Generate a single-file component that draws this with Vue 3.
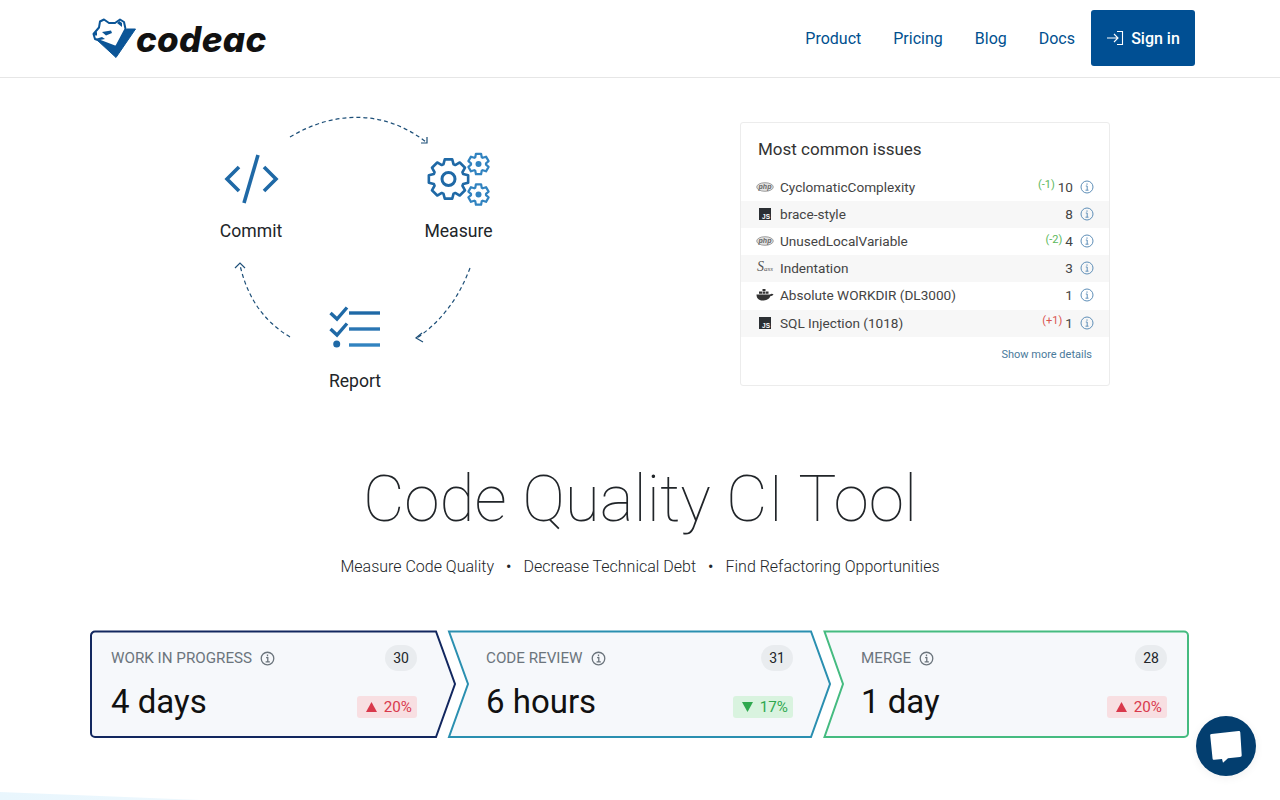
<template>
  <div class="page">
    <header class="topbar">
      <a class="logo">
        <svg class="logo-mark" viewBox="0 0 46 42" width="46" height="42">
          <path d="M5 22 L24 39.500 L43.500 11 L34.500 11 L24 28 L8 21 Z" fill="#0b5597" stroke="#0b5597" stroke-linejoin="round" />
          <path d="M1.500 16 L7 9.500 L8 3.500 L12 1.500 L17 5 L23 5 L28 1.500 L32 4 L33.500 11 L24 29 L7 22.500 L3 21 Z" fill="#fff" stroke="#0b5597" stroke-width="2" stroke-linejoin="round" />
          <path d="M1.500 15 L5 14 L5 17.500 L2.500 17.500 Z M10 14 L19 12.500 L20 15 L14 17.500 Z M3.500 21 L10 19 L13 21 L8 22 Z" fill="#0b5597" />
          <path d="M25 5 L27.500 3 L30 5 L30 9 Z" fill="#0b5597" />
        </svg>
        <span class="logo-text">codeac</span>
      </a>
      <nav class="nav">
        <a v-for="item in navItems" :key="item">{{ item }}</a>
        <button class="signin">
          <svg viewBox="0 0 18 16" width="18" height="16" fill="none" stroke="#fff" stroke-width="1.100">
            <path d="M1 8 H12 M8 4 L12 8 L8 12 M11 1.500 H16.500 V14.500 H11" />
          </svg>
          Sign in
        </button>
      </nav>
    </header>

    <section class="hero">
      <svg class="cycle" viewBox="200 100 310 300" width="310" height="300">
        <g fill="none" stroke="#1d4f78" stroke-width="1.200">
          <path d="M290 137 C335 110 385 110 426 142" stroke-dasharray="4 3" />
          <path d="M421 143 H427 V137" />
          <path d="M470 268 C458 300 440 322 417 338" stroke-dasharray="4 3" />
          <path d="M422 333 L416 338 L423 342" />
          <path d="M290 337 C262 320 247 296 240 265" stroke-dasharray="4 3" />
          <path d="M235 268 L240 263 L245 268" />
        </g>
        <g fill="none" stroke="#1f69a6" stroke-width="3.600">
          <path d="M239 167 L227 179 L239 191 M264 167 L276 179 L264 191" />
          <path d="M258 155 L244 203" />
        </g>
        <g fill="none" stroke="#1f69a6" stroke-width="2.600" stroke-linejoin="round">
          <path :d="gear(448.500, 179, 20, 15.500, 8)" />
          <circle cx="448.500" cy="179" r="6.500" stroke-width="3" />
        </g>
        <g fill="none" stroke="#3183c0" stroke-width="2.200" stroke-linejoin="round">
          <path :d="gear(478.500, 164, 10.500, 7.500, 6)" />
          <circle cx="478.500" cy="164" r="3" fill="#3183c0" stroke="none" />
          <path :d="gear(478.500, 194.500, 10.500, 7.500, 6)" />
          <circle cx="478.500" cy="194.500" r="3" fill="#3183c0" stroke="none" />
        </g>
        <g fill="none" stroke-width="3.400">
          <path d="M330.500 313 L337 319 L347 307.500 M330.500 329 L337 335 L347 323.500" stroke="#1f69a6" />
          <path d="M349 313 H380" stroke="#1f69a6" />
          <path d="M349 329 H380" stroke="#2a76b3" />
          <path d="M349 345 H380" stroke="#3183c0" />
          <circle cx="336.700" cy="344" r="3.500" fill="#1f69a6" stroke="none" />
        </g>
        <text class="cycle-label" x="251" y="237">Commit</text>
        <text class="cycle-label" x="458.500" y="237">Measure</text>
        <text class="cycle-label" x="355" y="387">Report</text>
      </svg>

      <div class="issues">
        <h3>Most common issues</h3>
        <div v-for="row in issues" :key="row.name" class="issue">
          <span class="lang">
            <svg v-if="row.lang === 'php'" viewBox="0 0 18 10" width="18" height="10">
              <ellipse cx="9" cy="5" rx="8.300" ry="4.300" fill="#e2e2e2" stroke="#8a8a8a" stroke-width="0.800" />
              <text x="9" y="7.200" class="php">php</text>
            </svg>
            <svg v-else-if="row.lang === 'js'" class="js-icon" viewBox="0 0 12 12" width="12" height="12">
              <rect width="12" height="12" fill="#2b2f33" />
              <text x="11" y="10.800" class="js">JS</text>
            </svg>
            <span v-else-if="row.lang === 'sass'" class="sass">S<small>ass</small></span>
            <svg v-else viewBox="0 0 18 12" width="18" height="12">
              <path d="M0.500 5.500 H14 C15 4.500 16.500 4.500 17.500 5.500 C16.500 7 15.500 7 14.500 7 C13 10.500 10 11.500 6.500 11.500 C2.500 11.500 0.500 9 0.500 5.500 Z" fill="#333" />
              <path d="M3 2.500 H6 V4.800 H3 Z M6.500 2.500 H9.500 V4.800 H6.500 Z M6.500 0 H9.500 V2 H6.500 Z M10 2.500 H12.500 V4.800 H10 Z" fill="#333" />
            </svg>
          </span>
          <span class="issue-name">{{ row.name }}</span>
          <sup v-if="row.delta" class="issue-delta" :class="row.delta.includes('+') ? 'worse' : 'better'">{{ row.delta }}</sup>
          <span class="issue-count">{{ row.count }}</span>
          <svg class="issue-info" viewBox="0 0 14 14" width="14" height="14" fill="none" stroke="#5f8fb8">
            <circle cx="7" cy="7" r="6" />
            <path d="M5.800 6 H7.200 V10 M5.500 10.200 H8.500 M7 3.400 V4.800" />
          </svg>
        </div>
        <a class="more">Show more details</a>
      </div>
    </section>

    <section class="intro">
      <h1>Code Quality CI Tool</h1>
      <p>
        <span>Measure Code Quality</span><i>•</i><span>Decrease Technical Debt</span><i>•</i><span>Find Refactoring Opportunities</span>
      </p>
    </section>

    <section class="stages">
      <div v-for="stage in stages" :key="stage.label" class="stage" :class="stage.kind">
        <svg class="stage-shape" :viewBox="`0 0 ${stage.width} 108`" :width="stage.width" height="108">
          <path :d="stage.shape" fill="#f6f8fb" :stroke="stage.color" stroke-width="2" />
        </svg>
        <div class="stage-row">
          <span class="stage-label">
            {{ stage.label }}
            <svg viewBox="0 0 16 16" width="15" height="15" fill="none" stroke="#6c757d" stroke-width="1.400">
              <circle cx="8" cy="8" r="6.700" />
              <path d="M6.500 7 H8.300 V11.500 M6 11.500 H10.500 M8 3.800 V5.600" />
            </svg>
          </span>
          <span class="stage-count">{{ stage.count }}</span>
        </div>
        <div class="stage-row stage-bottom">
          <span class="stage-value">{{ stage.value }}</span>
          <span class="stage-delta" :class="stage.up ? 'up' : 'down'">
            <svg viewBox="0 0 11 10" width="11" height="10">
              <path :d="stage.up ? 'M5.500 0 L11 10 H0 Z' : 'M0 0 H11 L5.500 10 Z'" fill="currentColor" />
            </svg>
            {{ stage.delta }}
          </span>
        </div>
      </div>
    </section>

    <div class="next-section"></div>

    <button class="chat">
      <svg viewBox="0 0 34 34" width="34" height="34">
        <path d="M2.500 5 L29.500 2 C31 1.900 31.200 2.500 31.300 3.500 L32.700 26 C32.800 27.500 32 27.800 31 27.900 L19 29.200 L14 33.800 L13 30 L5.500 30.800 C4 31 3.600 30.400 3.500 29 L1.200 6.500 C1.100 5.500 1.500 5.100 2.500 5 Z" fill="#fff" />
      </svg>
    </button>
  </div>
</template>

<script setup>
const navItems = ["Product", "Pricing", "Blog", "Docs"];

const issues = [
  { lang: "php", name: "CyclomaticComplexity", delta: "(-1)", count: 10 },
  { lang: "js", name: "brace-style", count: 8 },
  { lang: "php", name: "UnusedLocalVariable", delta: "(-2)", count: 4 },
  { lang: "sass", name: "Indentation", count: 3 },
  { lang: "docker", name: "Absolute WORKDIR (DL3000)", count: 1 },
  { lang: "js", name: "SQL Injection (1018)", delta: "(+1)", count: 1 },
];

const stages = [
  {
    kind: "first",
    label: "WORK IN PROGRESS",
    count: 30,
    value: "4 days",
    delta: "20%",
    up: true,
    color: "#12275f",
    width: 368,
    shape: "M6 1.500 H347 L366 54 L347 107 H6 a4 4 0 0 1 -4 -4 V5.500 a4 4 0 0 1 4 -4 Z",
  },
  {
    kind: "middle",
    label: "CODE REVIEW",
    count: 31,
    value: "6 hours",
    delta: "17%",
    up: false,
    color: "#2a8fb0",
    width: 384,
    shape: "M2 1.500 H364 L383 54 L364 107 H2 L21 54 Z",
  },
  {
    kind: "last",
    label: "MERGE",
    count: 28,
    value: "1 day",
    delta: "20%",
    up: true,
    color: "#45bb80",
    width: 367,
    shape: "M1.500 1.500 H361 a4 4 0 0 1 4 4 V103 a4 4 0 0 1 -4 4 H1.500 L20 54 Z",
  },
];

// toothed outline for the cog icons
const gear = (cx, cy, outer, inner, teeth) => {
  const step = (Math.PI * 2) / teeth;
  const pts = [];
  for (let i = 0; i < teeth; i++) {
    const a = i * step - Math.PI / 2;
    const offsets = [
      [-0.5, inner],
      [-0.28, outer],
      [0.28, outer],
      [0.5, inner],
    ];
    for (const [o, r] of offsets) {
      const t = a + o * step * 0.85;
      pts.push(`${(cx + Math.cos(t) * r).toFixed(2)} ${(cy + Math.sin(t) * r).toFixed(2)}`);
    }
  }
  return "M" + pts.join(" L") + " Z";
};
</script>

<style>
html,
body {
  margin: 0;
  background: #fff;
}
</style>

<style scoped>
.page {
  width: 1280px;
  height: 800px;
  overflow: hidden;
  font-family: Roboto, "Liberation Sans", sans-serif;
  color: #212529;
  background: #fff;
}

.topbar {
  height: 77px;
  border-bottom: 1px solid #e6e6e6;
  padding: 0 85px 0 92px;
  display: flex;
  align-items: center;
  justify-content: space-between;
}

.logo {
  display: flex;
  align-items: center;
}

.logo-text {
  font-family: Inter, "Open Sans", sans-serif;
  font-weight: 800;
  font-style: italic;
  font-size: 35px;
  line-height: 40px;
  color: #111;
  margin-left: -2px;
  margin-top: 1px;
  letter-spacing: 0.3px;
}

.nav {
  display: flex;
  align-items: center;
  margin-top: -1px;
}

.nav a {
  font-size: 16px;
  color: #00508f;
  padding: 0 16px;
}

.signin {
  width: 104px;
  height: 56px;
  border: 0;
  border-radius: 3px;
  background: #004f93;
  color: #fff;
  font: 500 16px Roboto, sans-serif;
  display: flex;
  align-items: center;
  justify-content: center;
  gap: 7px;
  padding: 0;
}

.hero {
  display: flex;
  align-items: flex-start;
  padding: 22px 0 0 200px;
  height: 340px;
}

.cycle-label {
  font-size: 17.600px;
  fill: #212529;
  text-anchor: middle;
}

.issues {
  width: 368px;
  height: 262px;
  margin: 22px 0 0 230px;
  border: 1px solid #ececec;
  border-radius: 3px;
  display: flex;
  flex-direction: column;
}

.issues h3 {
  margin: 0;
  padding: 16px 0 13.600px 17px;
  font-size: 17px;
  line-height: 21px;
  font-weight: 400;
  color: #333;
}

.issue {
  box-sizing: border-box;
  height: 27.200px;
  padding: 0 15px 1px 15px;
  display: flex;
  align-items: center;
  font-size: 13.600px;
  color: #444;
}

.issue:nth-child(odd) {
  background: #f7f7f7;
}

.lang {
  width: 24px;
  display: flex;
  align-items: center;
}

.js-icon {
  margin-left: 3px;
}

.php {
  font: italic 700 7px "Liberation Sans", sans-serif;
  fill: #666;
  text-anchor: middle;
}

.js {
  font: 700 6.500px "Liberation Sans", sans-serif;
  fill: #fff;
  text-anchor: end;
}

.sass {
  margin-left: 1px;
  font: italic 14px/14px "Liberation Serif", serif;
  color: #555;
}

.sass small {
  font-size: 7px;
}

.issue-name {
  flex: 1;
}

.issue-delta {
  font-size: 11px;
  line-height: 1;
  margin-right: 3px;
  position: relative;
  top: -2px;
}

.better {
  color: #5cb85c;
}

.worse {
  color: #d9534f;
}

.issue-info {
  margin-left: 7px;
}

.more {
  align-self: flex-end;
  margin: 11px 17px 0 0;
  font-size: 11px;
  line-height: 13px;
  color: #4a7a9b;
}

.intro {
  text-align: center;
  height: 189px;
}

.intro h1 {
  margin: 0;
  padding-top: 20px;
  font-size: 64px;
  line-height: 80px;
  font-weight: 100;
  color: #212529;
}

.intro p {
  margin: 15px 0 0;
  font-size: 16px;
  line-height: 24px;
  font-weight: 300;
}

.intro i {
  font-style: normal;
  font-weight: 400;
  margin: 0 12px;
}

.stages {
  display: flex;
  padding-left: 89px;
  height: 108px;
  margin-top: 1px;
}

.stage {
  position: relative;
  box-sizing: border-box;
  flex: none;
  height: 108px;
  padding-top: 15px;
}

.first {
  width: 368px;
  margin-right: -10px;
  padding-left: 22px;
  padding-right: 40px;
}

.middle {
  width: 384px;
  margin-right: -8px;
  padding-left: 39px;
  padding-right: 38px;
}

.last {
  width: 367px;
  padding-left: 38px;
  padding-right: 23px;
}

.stage-shape {
  position: absolute;
  left: 0;
  top: 0;
}

.stage-row {
  position: relative;
  display: flex;
  align-items: center;
  justify-content: space-between;
  height: 26px;
}

.stage-label {
  display: flex;
  align-items: center;
  gap: 8px;
  font-size: 15.200px;
  color: #6c757d;
}

.stage-count {
  width: 32px;
  height: 26px;
  border-radius: 13px;
  background: #e9ecef;
  font-size: 14px;
  line-height: 26px;
  text-align: center;
}

.stage-bottom {
  margin-top: 9px;
  height: 44px;
  align-items: flex-start;
}

.stage-value {
  font-size: 33px;
  line-height: 44px;
  color: #111;
}

.stage-delta {
  margin-top: 16px;
  padding: 0 5px 0 9px;
  height: 22px;
  border-radius: 3px;
  font-size: 15.200px;
  line-height: 22px;
  display: flex;
  align-items: center;
  gap: 7px;
}

.up {
  background: #f8dfe2;
  color: #d9394c;
}

.down {
  background: #d9f3df;
  color: #2fa84f;
}

.next-section {
  height: 8px;
  margin-top: 54px;
  background: linear-gradient(90deg, #e9f6fd, #ffffff);
  clip-path: polygon(0 0, 200px 100%, 0 100%);
}

.chat {
  position: fixed;
  left: 1196px;
  top: 716px;
  width: 60px;
  height: 60px;
  border: 0;
  border-radius: 50%;
  padding: 0;
  background: #033e6f;
  box-shadow: 0 2px 10px rgba(0, 0, 0, 0.06);
  display: flex;
  align-items: center;
  justify-content: center;
}
</style>
